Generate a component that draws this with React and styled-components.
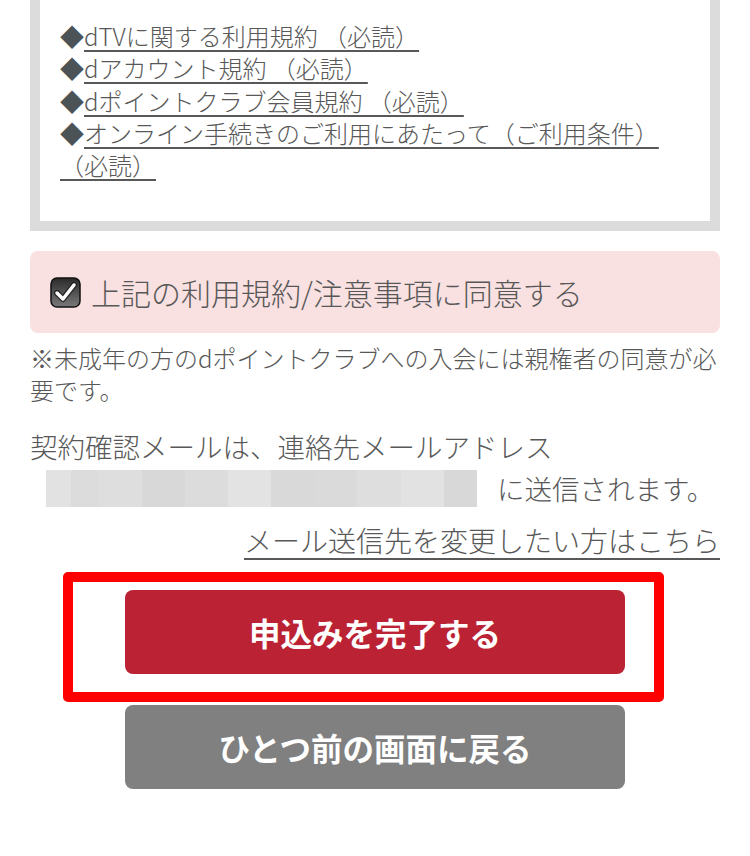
import React from "react";
import styled, { createGlobalStyle } from "styled-components";

const GlobalStyle = createGlobalStyle`
  body {
    margin: 0;
    background: #fff;
    font-family: "Noto Sans CJK JP", "Noto Sans", sans-serif;
    font-weight: 300;
    color: #585858;
  }
`;

const Page = styled.div`
  width: 750px;
  padding: 0 30px 60px;
  box-sizing: border-box;
`;

// terms box, its top edge is scrolled off screen
const TermsFrame = styled.div`
  border: 10px solid #dcdcdc;
  border-top: 0;
  background: #fff;
  padding: 20px 20px 40px;
`;

const TermsList = styled.ul`
  list-style: none;
  margin: 0;
  padding: 0;
  font-size: 24px;
  line-height: 32.3px;
`;

const TermItem = styled.li`
  &::before {
    content: "◆";
    color: #4b5357;
  }
`;

const TermLink = styled.a`
  color: #585858;
  text-decoration: underline;
  text-underline-offset: 4px;
  text-decoration-thickness: 2px;
`;

const AgreeBox = styled.label`
  display: flex;
  align-items: center;
  gap: 10px;
  margin-top: 20px;
  height: 82px;
  padding: 0 20px;
  background: #f9e0e1;
  border-radius: 8px;
  font-size: 30px;
  color: #585858;
`;

const Note = styled.p`
  margin: 9px 0 0;
  font-size: 24px;
  line-height: 32px;
`;

const MailText = styled.p`
  margin: 19px 0 0;
  font-size: 27.5px;
  line-height: 42px;
`;

const MailLine = styled.span`
  display: flex;
  align-items: center;
  gap: 20px;
`;

const Blurred = styled.span`
  display: inline-flex;
  margin-left: 16px;
  height: 37px;
  width: 431px;
`;

const BlurCell = styled.span`
  flex: 0 0 ${(p) => p.w}px;
  background: ${(p) => p.c};
`;

const ChangeLink = styled.a`
  display: block;
  margin-top: 10px;
  text-align: right;
  font-size: 28px;
  line-height: 42px;
  color: #585858;
  text-decoration: underline;
  text-underline-offset: 6px;
  text-decoration-thickness: 2px;
`;

const Highlight = styled.div`
  margin: 11px 0 0 33px;
  width: 601px;
  box-sizing: border-box;
  border: 10px solid #ff0000;
  border-radius: 5px;
  padding: 8px 29px 18px 52px;
`;

const ActionButton = styled.button`
  display: block;
  width: 500px;
  height: 84px;
  border: 0;
  border-radius: 8px;
  background: ${(p) => (p.secondary ? "#808080" : "#bb2335")};
  color: #fff;
  font-family: "Noto Sans CJK JP", "Noto Sans", sans-serif;
  font-size: 31.5px;
  font-weight: bold;
  cursor: pointer;
`;

const BackRow = styled.div`
  margin: 3px 0 0 95px;
`;

function CheckIcon() {
  return (
    <svg width="31" height="31" viewBox="0 0 31 31">
      <defs>
        <linearGradient id="cb" x1="0" y1="0" x2="0" y2="1">
          <stop offset="0" stopColor="#2a2a2a" />
          <stop offset="1" stopColor="#7a7a7a" />
        </linearGradient>
      </defs>
      <rect x="1" y="1" width="29" height="29" rx="6" fill="url(#cb)" stroke="#111" strokeWidth="1.5" />
      <path d="M7 16 L13 22 L24 8" fill="none" stroke="#222" strokeWidth="6" strokeLinecap="round" strokeLinejoin="round" />
      <path d="M7 16 L13 22 L24 8" fill="none" stroke="#fff" strokeWidth="3.5" strokeLinecap="round" strokeLinejoin="round" />
    </svg>
  );
}

const blur = [
  [25, "#e2e2e2"],
  [28, "#dcdcdc"],
  [43, "#dedede"],
  [43, "#d8d8d8"],
  [43, "#dcdcdc"],
  [43, "#e3e3e3"],
  [43, "#d9d9d9"],
  [43, "#dadada"],
  [44, "#dedede"],
  [43, "#e2e2e2"],
  [33, "#d8d8d8"],
];

const terms = [
  "dTVに関する利用規約 （必読）",
  "dアカウント規約 （必読）",
  "dポイントクラブ会員規約 （必読）",
  "オンライン手続きのご利用にあたって（ご利用条件）（必読）",
];

export default function App() {
  return (
    <Page>
      <GlobalStyle />
      <TermsFrame>
        <TermsList>
          {terms.map((t) => (
            <TermItem key={t}>
              <TermLink href="#">{t}</TermLink>
            </TermItem>
          ))}
        </TermsList>
      </TermsFrame>

      <AgreeBox>
        <CheckIcon />
        上記の利用規約/注意事項に同意する
      </AgreeBox>

      <Note>※未成年の方のdポイントクラブへの入会には親権者の同意が必要です。</Note>

      <MailText>
        契約確認メールは、連絡先メールアドレス
        <MailLine>
          <Blurred>
            {blur.map(([w, c], i) => (
              <BlurCell key={i} w={w} c={c} />
            ))}
          </Blurred>
          に送信されます。
        </MailLine>
      </MailText>

      <ChangeLink href="#">メール送信先を変更したい方はこちら</ChangeLink>

      <Highlight>
        <ActionButton>申込みを完了する</ActionButton>
      </Highlight>
      <BackRow>
        <ActionButton secondary>ひとつ前の画面に戻る</ActionButton>
      </BackRow>
    </Page>
  );
}
